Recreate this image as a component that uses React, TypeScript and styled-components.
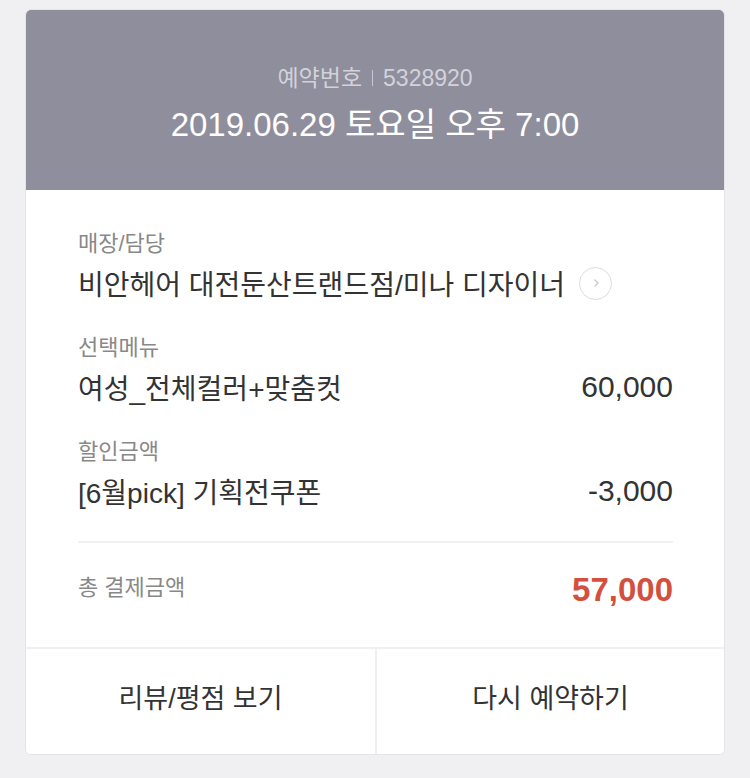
import React from 'react';
import styled, { createGlobalStyle } from 'styled-components';

const GlobalStyle = createGlobalStyle`
  html, body {
    margin: 0;
    padding: 0;
    background: #f0f0f3;
    font-family: "Liberation Sans", "Noto Sans CJK KR", sans-serif;
  }
`;

const Page = styled.div`
  padding: 9px 25px 24px 25px;
`;

const Card = styled.div`
  background: #fff;
  border: 1px solid #e4e4e8;
  border-radius: 6px;
  overflow: hidden;
`;

const Header = styled.div`
  background: #8f8e9c;
  height: 180px;
  display: flex;
  flex-direction: column;
  align-items: center;
  justify-content: center;
  padding-top: 8px;
  box-sizing: border-box;
`;

const OrderNo = styled.div`
  color: #d3d2da;
  font-size: 23px;
  line-height: 30px;
  display: flex;
  align-items: center;
  gap: 10px;
`;

const Bar = styled.span`
  display: inline-block;
  width: 1px;
  height: 16px;
  background: #c9c8d0;
`;

const DateLine = styled.div`
  color: #fff;
  font-size: 33px;
  line-height: 40px;
  margin-top: 12px;
`;

const Body = styled.div`
  padding: 39px 51px 0 52px;
`;

const Section = styled.div`
  margin-bottom: 30px;

  &:last-of-type {
    margin-bottom: 0;
  }
`;

const Label = styled.div`
  color: #888;
  font-size: 22px;
  line-height: 30px;
`;

const Row = styled.div`
  display: flex;
  align-items: center;
  justify-content: space-between;
  margin-top: 4px;
  height: 40px;
`;

const Value = styled.div`
  color: #333;
  font-size: 28px;
  display: flex;
  align-items: center;
  gap: 14px;
`;

const Amount = styled.div`
  color: #333;
  font-size: 30px;
`;

const CircleButton = styled.span`
  width: 33px;
  height: 33px;
  border: 1.5px solid #dcdcdc;
  border-radius: 50%;
  display: inline-flex;
  align-items: center;
  justify-content: center;
  box-sizing: border-box;
`;

const Divider = styled.div`
  height: 2px;
  background: #f0f0f2;
  margin-top: 26px;
`;

const TotalRow = styled.div`
  display: flex;
  align-items: center;
  justify-content: space-between;
  height: 40px;
  padding: 25px 0 39px;
`;

const TotalAmount = styled.div`
  color: #d4503e;
  font-size: 33px;
  font-weight: 700;
  margin-top: 4px;
`;

const Footer = styled.div`
  display: grid;
  grid-template-columns: 1fr 1fr;
  border-top: 2px solid #f0f0f2;
`;

const FooterButton = styled.button<{ $divider?: boolean }>`
  height: 105px;
  padding: 0 0 10px;
  background: #fff;
  border: none;
  border-left: ${(p) => (p.$divider ? '2px solid #f0f0f2' : 'none')};
  color: #333;
  font-family: inherit;
  font-size: 27px;
  cursor: pointer;
`;

const items = [
  { label: '선택메뉴', name: '여성_전체컬러+맞춤컷', amount: '60,000' },
  { label: '할인금액', name: '[6월pick] 기획전쿠폰', amount: '-3,000' },
];

export default function App() {
  return (
    <>
      <GlobalStyle />
      <Page>
        <Card>
          <Header>
            <OrderNo>
              <span>예약번호</span>
              <Bar />
              <span>5328920</span>
            </OrderNo>
            <DateLine>2019.06.29 토요일 오후 7:00</DateLine>
          </Header>
          <Body>
            <Section>
              <Label>매장/담당</Label>
              <Row>
                <Value>
                  비안헤어 대전둔산트랜드점/미나 디자이너
                  <CircleButton>
                    <svg width="12" height="12" viewBox="0 0 12 12">
                      <path d="M4.5 2.5 L8 6 L4.5 9.5" fill="none" stroke="#c8c8c8" strokeWidth="1.2" />
                    </svg>
                  </CircleButton>
                </Value>
              </Row>
            </Section>
            {items.map((it) => (
              <Section key={it.label}>
                <Label>{it.label}</Label>
                <Row>
                  <Value>{it.name}</Value>
                  <Amount>{it.amount}</Amount>
                </Row>
              </Section>
            ))}
            <Divider />
            <TotalRow>
              <Label>총 결제금액</Label>
              <TotalAmount>57,000</TotalAmount>
            </TotalRow>
          </Body>
          <Footer>
            <FooterButton>리뷰/평점 보기</FooterButton>
            <FooterButton $divider>다시 예약하기</FooterButton>
          </Footer>
        </Card>
      </Page>
    </>
  );
}
